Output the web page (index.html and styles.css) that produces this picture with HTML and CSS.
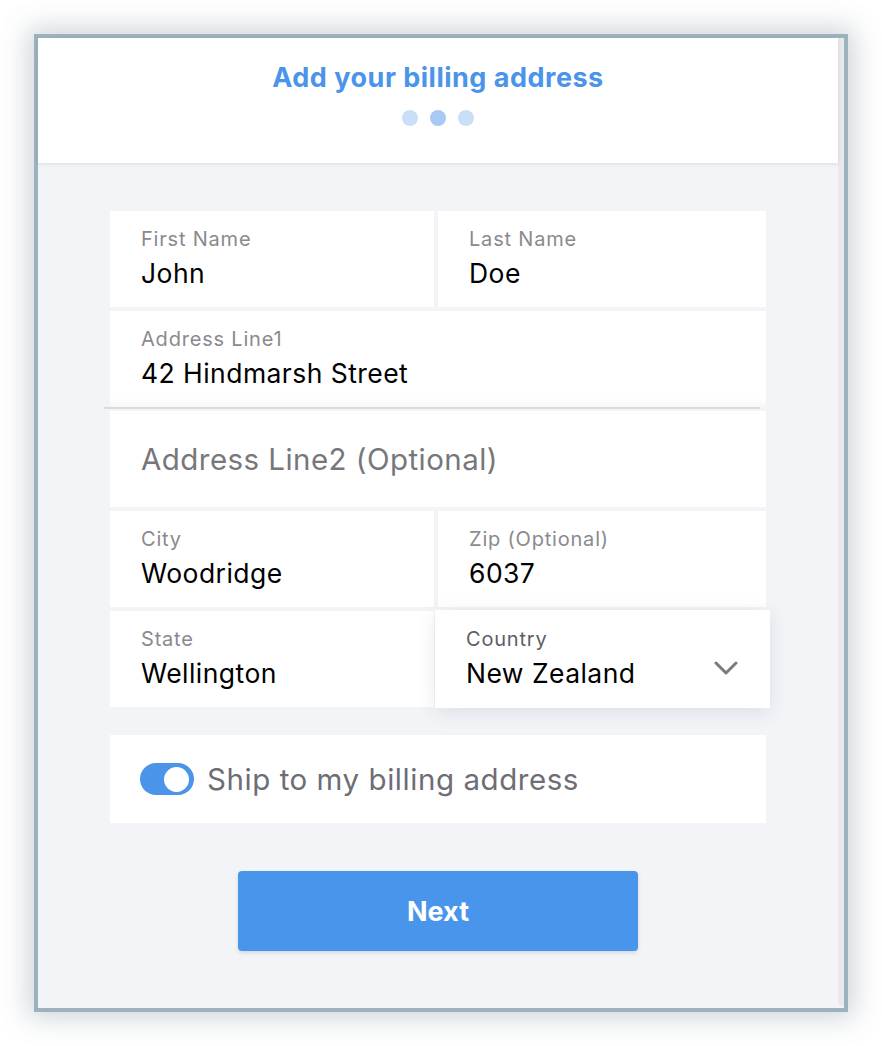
FILE: index.html
```html
<!DOCTYPE html>
<html lang="en">
<head>
<meta charset="utf-8">
<title>Add your billing address</title>
<link rel="stylesheet" href="styles.css">
</head>
<body>
<div class="frame">
  <div class="main">
    <header class="header">
      <h1 class="title">Add your billing address</h1>
      <div class="dots">
        <span class="dot"></span>
        <span class="dot dot-active"></span>
        <span class="dot"></span>
      </div>
    </header>
    <div class="content">
      <div class="form">
        <div class="row">
          <div class="field field-left">
            <div class="label">First Name</div>
            <div class="value">John</div>
          </div>
          <div class="field">
            <div class="label">Last Name</div>
            <div class="value">Doe</div>
          </div>
        </div>
        <div class="row">
          <div class="field field-focused">
            <div class="label">Address Line1</div>
            <div class="value">42 Hindmarsh Street</div>
          </div>
        </div>
        <div class="row">
          <div class="field field-empty">
            <div class="placeholder">Address Line2 (Optional)</div>
          </div>
        </div>
        <div class="row">
          <div class="field field-left">
            <div class="label">City</div>
            <div class="value">Woodridge</div>
          </div>
          <div class="field">
            <div class="label">Zip (Optional)</div>
            <div class="value">6037</div>
          </div>
        </div>
        <div class="row">
          <div class="field field-left">
            <div class="label">State</div>
            <div class="value">Wellington</div>
          </div>
          <div class="field field-select">
            <div class="select-text">
              <div class="label label-dark">Country</div>
              <div class="value">New Zealand</div>
            </div>
            <svg class="chevron" width="24" height="14" viewBox="0 0 24 14" aria-hidden="true">
              <polyline points="2,2 12,12 22,2" fill="none" stroke="#7b7b7f" stroke-width="3" stroke-linecap="round" stroke-linejoin="round"/>
            </svg>
          </div>
        </div>
      </div>
      <div class="toggle-card">
        <span class="toggle"><span class="knob"></span></span>
        <span class="toggle-text">Ship to my billing address</span>
      </div>
      <button class="next" type="button">Next</button>
    </div>
  </div>
  <div class="gutter"></div>
</div>
</body>
</html>
```

FILE: styles.css
```css
* {
  box-sizing: border-box;
}

html, body {
  margin: 0;
  padding: 0;
  background: #ffffff;
}

body {
  font-family: Inter, "Noto Sans", "Liberation Sans", sans-serif;
  padding: 34px;
}

.frame {
  width: 814px;
  height: 978px;
  border: 4px solid #9cb2be;
  display: flex;
  box-shadow: 0 0 26px 6px rgba(95, 115, 130, 0.30);
  background: #f3f4f8;
}

.main {
  flex: 1;
  display: flex;
  flex-direction: column;
  background: #f3f4f8;
}

.gutter {
  width: 6px;
  background: #e9e9eb;
  border-bottom-left-radius: 4px;
  margin-bottom: 2px;
}

.header {
  height: 125px;
  background: #ffffff;
  display: flex;
  flex-direction: column;
  align-items: center;
  padding-top: 24px;
  box-shadow: 0 1px 4px rgba(0, 0, 0, 0.10);
  position: relative;
  z-index: 1;
}

.title {
  margin: 0;
  font-size: 27px;
  line-height: 32px;
  font-weight: 700;
  color: #4a94e9;
  letter-spacing: 0.5px;
}

.dots {
  display: flex;
  gap: 12px;
  margin-top: 16px;
}

.dot {
  width: 16px;
  height: 16px;
  border-radius: 50%;
  background: #c9dff8;
}

.dot-active {
  background: #a6caf3;
}

.content {
  display: flex;
  flex-direction: column;
  align-items: center;
  padding-top: 48px;
}

.form {
  width: 656px;
  display: flex;
  flex-direction: column;
  gap: 4px;
}

.row {
  display: flex;
  gap: 4px;
  height: 96px;
}

.field {
  flex: 1;
  min-width: 0;
  background: #ffffff;
  padding: 16px 31px 0 31px;
}

.field-left {
  flex: 0 0 324px;
}

.field-focused {
  position: relative;
  z-index: 1;
  box-shadow: inset 0 -10px 10px -8px rgba(0, 0, 0, 0.05);
}

.field-focused::after {
  content: "";
  position: absolute;
  left: -6px;
  right: 6px;
  bottom: -2px;
  height: 2px;
  background: #dadadc;
}

.field-empty {
  display: flex;
  align-items: center;
  padding-top: 0;
}

.field-select {
  display: flex;
  align-items: flex-start;
  margin: -1px -4px -1px -3px;
  padding-top: 17px;
  padding-right: 0;
  box-shadow: 0 4px 18px rgba(60, 70, 90, 0.12);
  position: relative;
  z-index: 2;
}

.select-text {
  flex: 1;
}

.chevron {
  align-self: center;
  margin-right: 32px;
}

.label {
  font-size: 20px;
  line-height: 24px;
  color: #8a8a8e;
  letter-spacing: 0.8px;
}

.label-dark {
  color: #5e5e62;
}

.value {
  margin-top: 6px;
  font-size: 26.5px;
  line-height: 32px;
  color: #000000;
  letter-spacing: 0.45px;
}

.placeholder {
  font-size: 29.5px;
  line-height: 36px;
  color: #77777b;
  letter-spacing: 0.45px;
}

.toggle-card {
  width: 656px;
  height: 88px;
  margin-top: 28px;
  background: #ffffff;
  display: flex;
  align-items: center;
  padding-left: 30px;
  gap: 13px;
}

.toggle {
  width: 54px;
  height: 32px;
  border-radius: 16px;
  background: #4a94ea;
  display: flex;
  align-items: center;
  justify-content: flex-end;
  padding-right: 5px;
}

.knob {
  width: 25px;
  height: 25px;
  border-radius: 50%;
  background: #ffffff;
}

.toggle-text {
  font-size: 29.5px;
  line-height: 36px;
  color: #6d6d75;
  letter-spacing: 0.55px;
}

.next {
  margin-top: 48px;
  width: 400px;
  height: 80px;
  border: none;
  border-radius: 4px;
  background: #4a95ec;
  color: #ffffff;
  font-family: Inter, "Noto Sans", "Liberation Sans", sans-serif;
  font-size: 27px;
  font-weight: 700;
  box-shadow: 0 2px 4px rgba(0, 0, 0, 0.12);
}
```
